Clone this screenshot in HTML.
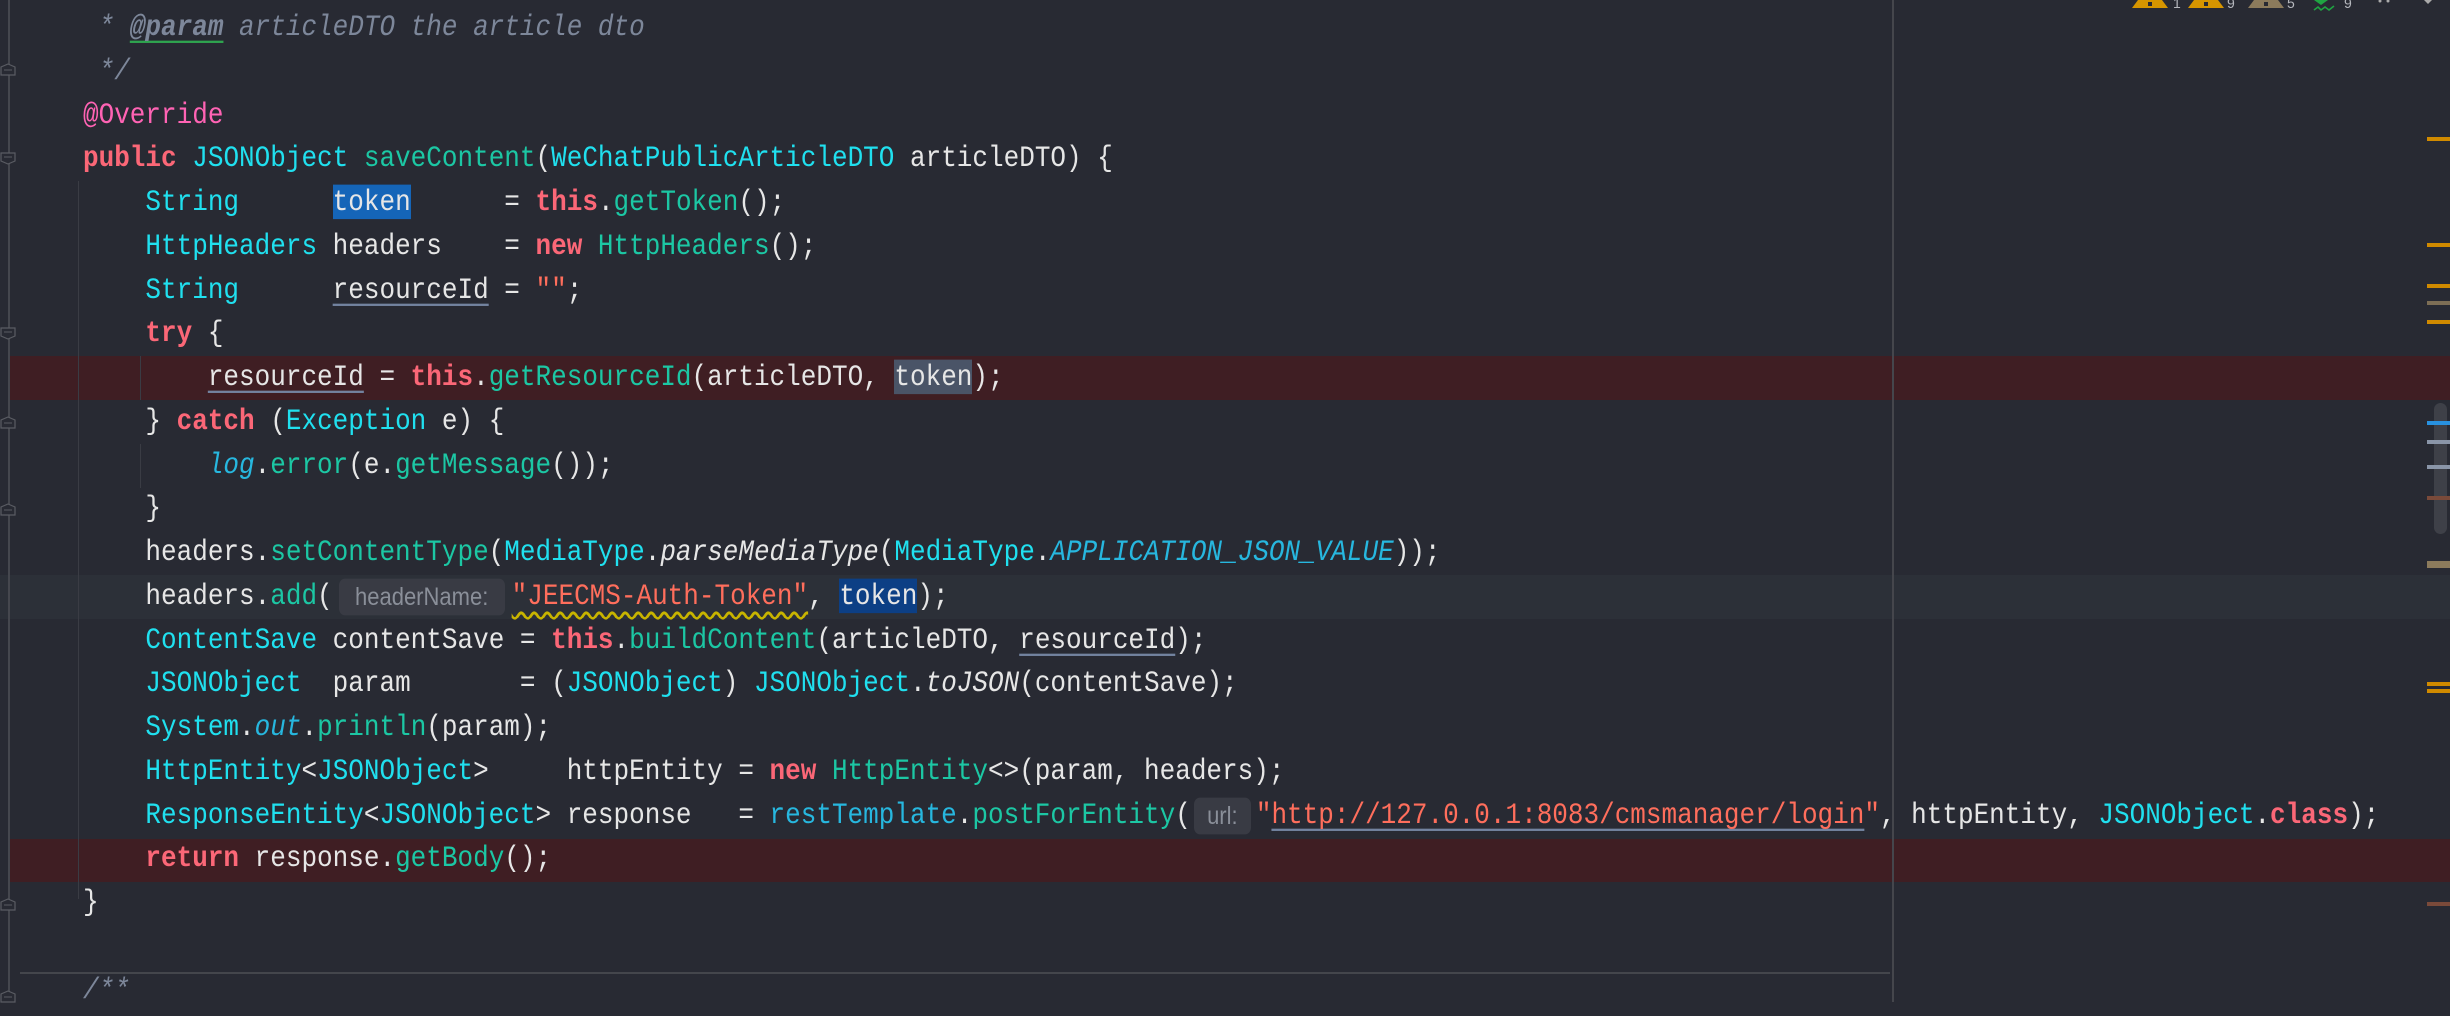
<!DOCTYPE html>
<html><head><meta charset="utf-8"><style>
html,body{margin:0;padding:0;}
body{width:2450px;height:1002px;background:#282a33;position:relative;overflow:hidden;font-family:"Liberation Mono",monospace;font-size:26px;color:#e6e6e6;}
.row{position:absolute;left:0;width:2450px;height:43.75px;}
.ln{position:absolute;left:83px;height:43.75px;line-height:43.75px;white-space:pre;transform:scaleY(1.15);transform-origin:0 50%;}
.k{color:#fb6777;font-weight:bold;}
.t{color:#20e0ef;}
.m{color:#1cc7a4;}
.a{color:#ff63b4;}
.c{color:#7d879a;font-style:italic;}
.s{color:#ff6e5c;}
.st{color:#27b7df;font-style:italic;}
.u{text-decoration:underline;text-decoration-color:#7383a0;text-underline-offset:5px;}
.w{text-decoration:underline wavy #c8b400;text-underline-offset:6px;}
.hint{display:inline-block;background:#393b44;color:#8a8f99;font-family:"Liberation Sans",sans-serif;font-size:22px;height:32px;line-height:32px;border-radius:6px;text-align:center;vertical-align:top;margin-top:6px;}
.sel1{background:#1565b8;}
.sel2{background:#4a5467;}
.sel3{background:#0c3f85;}
.g{position:absolute;width:1px;background:#3a3c44;}
.fold{position:absolute;left:0;width:16px;height:13px;}
.mk{position:absolute;left:2427px;width:23px;height:4px;}
</style></head><body>
<div class="row" style="top:356px;left:9px;background:#3f1e23;"></div>
<div class="row" style="top:838.5px;left:9px;background:#3f1e23;"></div>
<div class="row" style="top:575px;background:#2c3038;"></div>
<div style="position:absolute;left:8px;top:0;width:2px;height:1002px;background:#45474e;"></div>
<div style="position:absolute;left:20px;top:972px;width:1870px;height:2px;background:#44464c;"></div>
<div style="position:absolute;left:1892px;top:0;width:2px;height:1002px;background:#45464c;"></div>
<div class="g" style="left:78px;top:181px;height:718px;"></div>
<div class="g" style="left:140px;top:356px;height:44px;"></div>
<div class="g" style="left:140px;top:444px;height:44px;"></div>

<svg class="fold" style="top:63px" viewBox="0 0 16 13"><path d="M1 12V4L8 1L15 4V12Z" fill="#282a33" stroke="#5a5c63" stroke-width="1.2"/><path d="M4 7H12" stroke="#5a5c63"/></svg>
<svg class="fold" style="top:152px" viewBox="0 0 16 13"><path d="M1 1V9L8 12L15 9V1Z" fill="#282a33" stroke="#5a5c63" stroke-width="1.2"/><path d="M4 5H12" stroke="#5a5c63"/></svg>
<svg class="fold" style="top:327px" viewBox="0 0 16 13"><path d="M1 1V9L8 12L15 9V1Z" fill="#282a33" stroke="#5a5c63" stroke-width="1.2"/><path d="M4 5H12" stroke="#5a5c63"/></svg>
<svg class="fold" style="top:416px" viewBox="0 0 16 13"><path d="M1 12V4L8 1L15 4V12Z" fill="#282a33" stroke="#5a5c63" stroke-width="1.2"/><path d="M4 7H12" stroke="#5a5c63"/></svg>
<svg class="fold" style="top:503px" viewBox="0 0 16 13"><path d="M1 12V4L8 1L15 4V12Z" fill="#282a33" stroke="#5a5c63" stroke-width="1.2"/><path d="M4 7H12" stroke="#5a5c63"/></svg>
<svg class="fold" style="top:898px" viewBox="0 0 16 13"><path d="M1 12V4L8 1L15 4V12Z" fill="#282a33" stroke="#5a5c63" stroke-width="1.2"/><path d="M4 7H12" stroke="#5a5c63"/></svg>
<svg class="fold" style="top:990px" viewBox="0 0 16 13"><path d="M1 12V4L8 1L15 4V12Z" fill="#282a33" stroke="#5a5c63" stroke-width="1.2"/><path d="M4 7H12" stroke="#5a5c63"/></svg>

<div class="ln c" style="top:6px"> * <span style="text-decoration:underline;text-decoration-color:#2fa44f;text-underline-offset:5px;font-weight:bold">@param</span> articleDTO the article dto</div>
<div class="ln c" style="top:49.75px"> */</div>
<div class="ln a" style="top:93.5px">@Override</div>
<div class="ln" style="top:137.25px"><span class="k">public</span> <span class="t">JSONObject</span> <span class="m">saveContent</span>(<span class="t">WeChatPublicArticleDTO</span> articleDTO) {</div>
<div class="ln" style="top:181px">    <span class="t">String</span>      <span class="sel1">token</span>      = <span class="k">this</span>.<span class="m">getToken</span>();</div>
<div class="ln" style="top:224.75px">    <span class="t">HttpHeaders</span> headers    = <span class="k">new</span> <span class="m">HttpHeaders</span>();</div>
<div class="ln" style="top:268.5px">    <span class="t">String</span>      <span class="u">resourceId</span> = <span class="s">""</span>;</div>
<div class="ln" style="top:312.25px">    <span class="k">try</span> {</div>
<div class="ln" style="top:356px">        <span class="u">resourceId</span> = <span class="k">this</span>.<span class="m">getResourceId</span>(articleDTO, <span class="sel2">token</span>);</div>
<div class="ln" style="top:399.75px">    } <span class="k">catch</span> (<span class="t">Exception</span> e) {</div>
<div class="ln" style="top:443.5px">        <span class="st">log</span>.<span class="m">error</span>(e.<span class="m">getMessage</span>());</div>
<div class="ln" style="top:487.25px">    }</div>
<div class="ln" style="top:531px">    headers.<span class="m">setContentType</span>(<span class="t">MediaType</span>.<span style="font-style:italic">parseMediaType</span>(<span class="t">MediaType</span>.<span class="st">APPLICATION_JSON_VALUE</span>));</div>
<div class="ln" style="top:574.75px">    headers.<span class="m">add</span>(<span class="hint" style="margin-left:6px;width:166px;margin-right:7px">headerName:</span><span class="s w">"JEECMS-Auth-Token"</span>, <span class="sel3">token</span>);</div>
<div class="ln" style="top:618.5px">    <span class="t">ContentSave</span> contentSave = <span class="k">this</span>.<span class="m">buildContent</span>(articleDTO, <span class="u">resourceId</span>);</div>
<div class="ln" style="top:662.25px">    <span class="t">JSONObject</span>  param       = (<span class="t">JSONObject</span>) <span class="t">JSONObject</span>.<span style="font-style:italic">toJSON</span>(contentSave);</div>
<div class="ln" style="top:706px">    <span class="t">System</span>.<span class="st">out</span>.<span class="m">println</span>(param);</div>
<div class="ln" style="top:749.75px">    <span class="t">HttpEntity</span>&lt;<span class="t">JSONObject</span>&gt;     httpEntity = <span class="k">new</span> <span class="m">HttpEntity</span>&lt;&gt;(param, headers);</div>
<div class="ln" style="top:793.5px">    <span class="t">ResponseEntity</span>&lt;<span class="t">JSONObject</span>&gt; response   = <span style="color:#27b7df">restTemplate</span>.<span class="m">postForEntity</span>(<span class="hint" style="margin-left:3px;width:57px;margin-right:5px">url:</span><span class="s">"<span class="u">http://127.0.0.1:8083/cmsmanager/login</span>"</span>, httpEntity, <span class="t">JSONObject</span>.<span class="k">class</span>);</div>
<div class="ln" style="top:837.25px">    <span class="k">return</span> response.<span class="m">getBody</span>();</div>
<div class="ln" style="top:881px">}</div>
<div class="ln c" style="top:968.5px">/**</div>

<svg style="position:absolute;left:2130px;top:0" width="320" height="14" viewBox="0 0 320 14">
<path d="M8 0H32L38 8H2Z" fill="#d69500"/><rect x="18" y="2" width="4" height="4" fill="#282a33"/>
<text x="43" y="8" fill="#b5b7bd" font-family="Liberation Sans" font-size="14">1</text>
<path d="M64 0H88L94 8H58Z" fill="#d69500"/><rect x="74" y="2" width="4" height="4" fill="#282a33"/>
<text x="97" y="8" fill="#b5b7bd" font-family="Liberation Sans" font-size="14">9</text>
<path d="M124 0H148L154 8H118Z" fill="#8c7b5c"/><rect x="134" y="2" width="4" height="4" fill="#282a33"/>
<text x="157" y="8" fill="#b5b7bd" font-family="Liberation Sans" font-size="14">5</text>
<path d="M184 0H198L191 5Z" fill="#1fa442"/><path d="M184 10L188 7L191 10L195 7L199 10L204 6" stroke="#1fa442" stroke-width="1.6" fill="none"/>
<text x="214" y="8" fill="#b5b7bd" font-family="Liberation Sans" font-size="14">9</text>
<circle cx="250" cy="1" r="1.5" fill="#aaa"/><circle cx="258" cy="1" r="1.5" fill="#aaa"/>
<path d="M294 0H302L298 4Z" fill="#aaa"/>
</svg>

<div style="position:absolute;left:2434px;top:403px;width:13px;height:131px;border-radius:7px;background:#3e4048;"></div>
<div class="mk" style="top:137px;background:#d08a00"></div>
<div class="mk" style="top:243px;background:#d08a00"></div>
<div class="mk" style="top:284px;background:#d08a00"></div>
<div class="mk" style="top:301px;background:#7d6e55"></div>
<div class="mk" style="top:320px;background:#d08a00"></div>
<div class="mk" style="top:421px;background:#2891e0"></div>
<div class="mk" style="top:440px;background:#8a95a8"></div>
<div class="mk" style="top:465px;background:#8a95a8"></div>
<div class="mk" style="top:496px;background:#7a4a3a"></div>
<div class="mk" style="top:561px;height:7px;background:#8c7b5c"></div>
<div class="mk" style="top:682px;background:#d08a00"></div>
<div class="mk" style="top:689px;background:#d08a00"></div>
<div class="mk" style="top:902px;background:#7a4a3a"></div>
</body></html>
